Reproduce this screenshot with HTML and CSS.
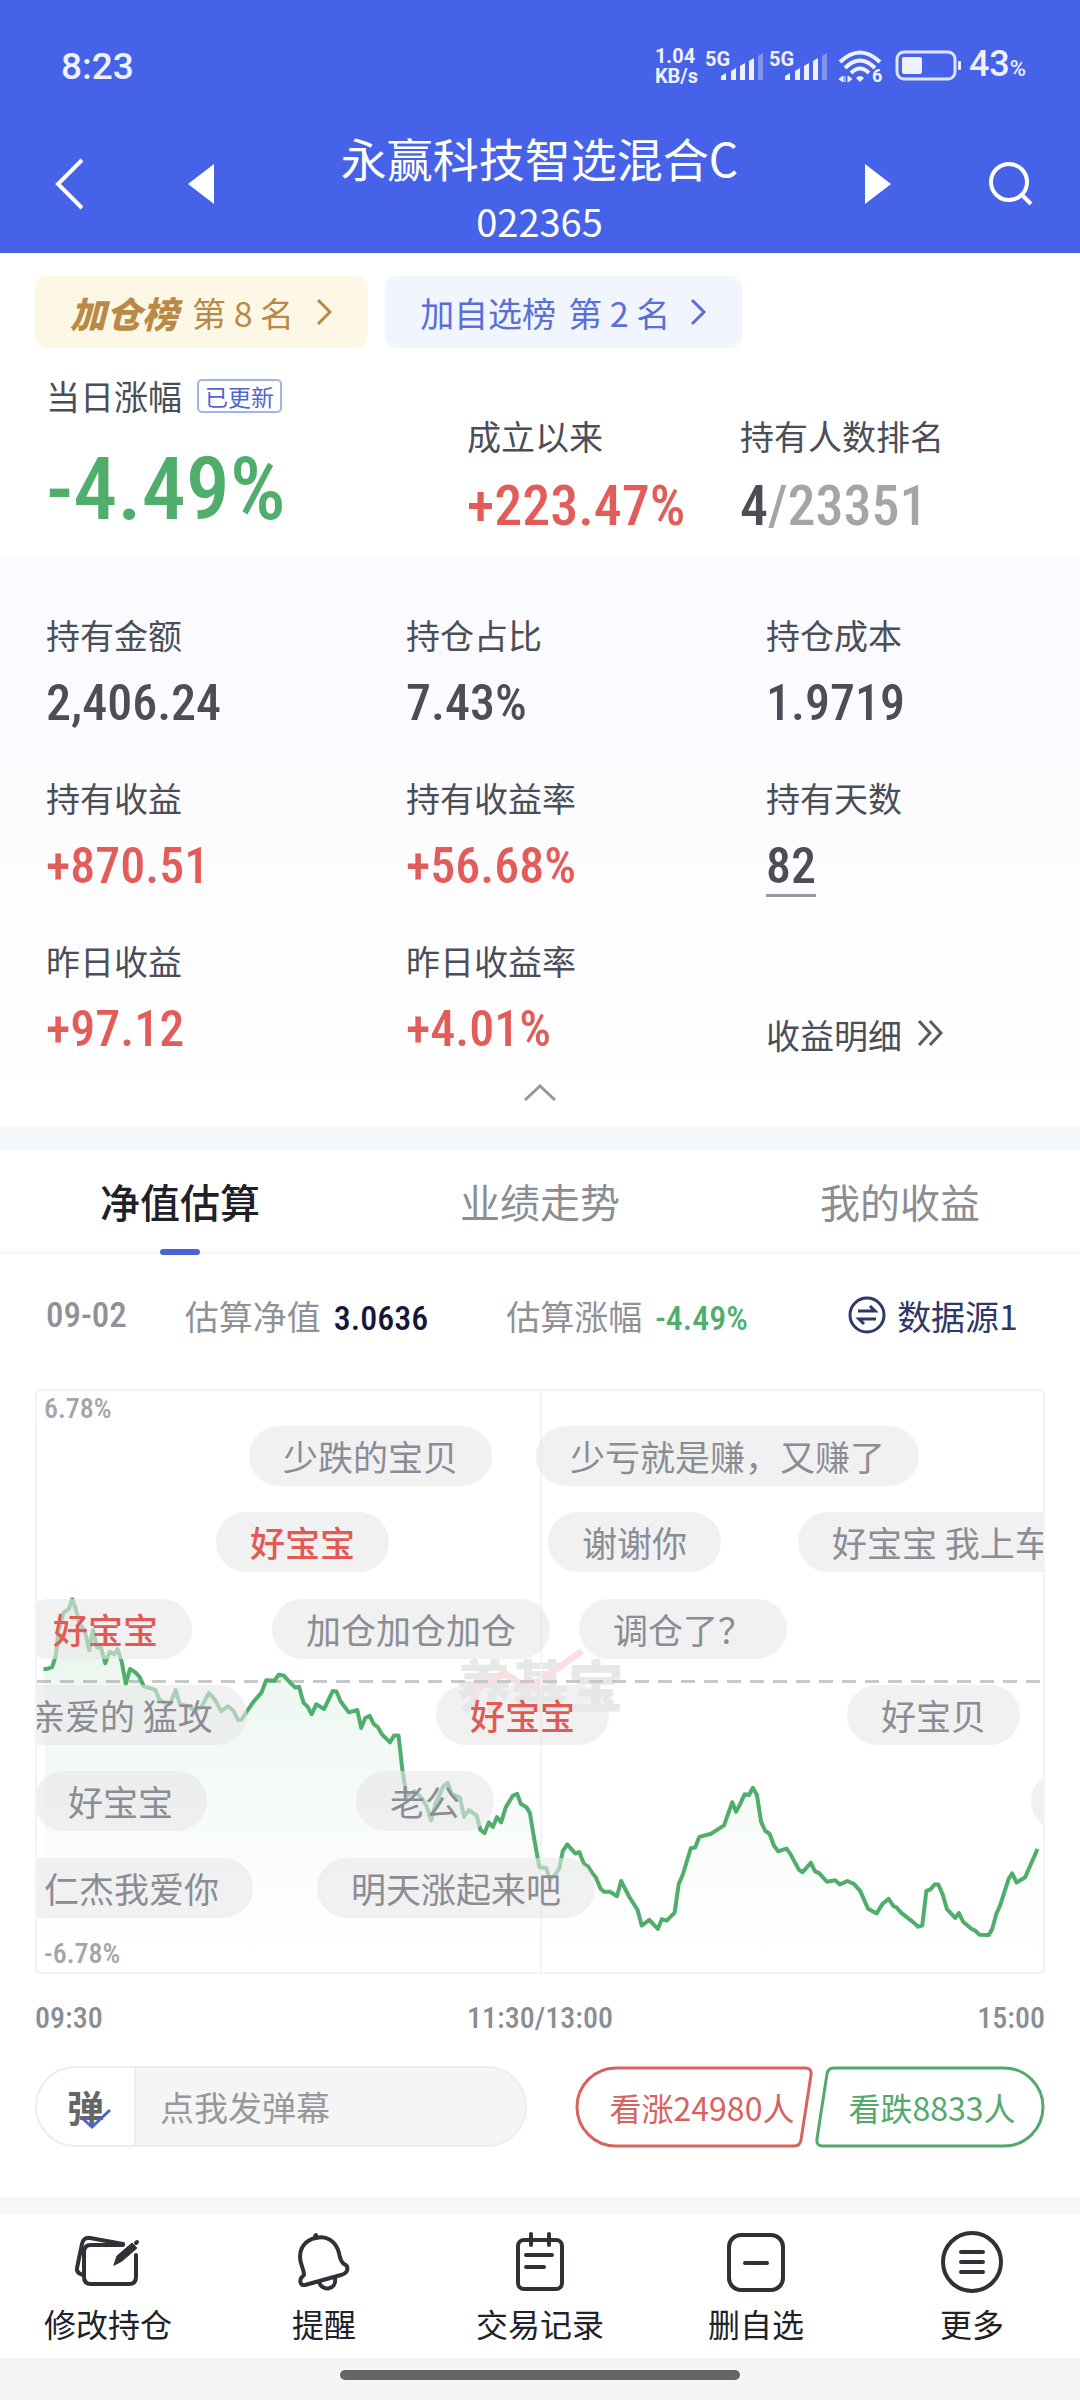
FILE: index.html
```html
<!DOCTYPE html>
<html lang="zh-CN">
<head>
<meta charset="utf-8">
<meta name="viewport" content="width=device-width, initial-scale=1">
<title>永赢科技智选混合C</title>
<link rel="stylesheet" href="styles.css">
</head>
<body>
<header class="top">
  <div class="status">
    <span class="status-time">8:23</span>
    <div class="status-icons">
      <span class="net-speed">1.04<br>KB/s</span>
      <svg class="signal" width="60" height="36" viewBox="0 0 60 36">
        <text x="0" y="18" class="signal-text">5G</text>
        <path d="M16 32v-4l5-3v7zM26 32v-9l5-3v12zM35 32v-14l5-3v17zM44 32v-19l5-3v22z"/>
        <path class="dim" d="M53 32v-24l5-3v27z"/>
      </svg>
      <svg class="signal" width="60" height="36" viewBox="0 0 60 36">
        <text x="0" y="18" class="signal-text">5G</text>
        <path d="M16 32v-4l5-3v7zM26 32v-9l5-3v12zM35 32v-14l5-3v17zM44 32v-19l5-3v22z"/>
        <path class="dim" d="M53 32v-24l5-3v27z"/>
      </svg>
      <svg class="wifi" width="46" height="36" viewBox="0 0 46 36">
        <g fill="none" stroke="#eef1ff" stroke-width="4">
          <path d="M3 14Q23-5 43 14"/>
          <path d="M8 20Q23 5 38 20"/>
          <path d="M14 25Q23 16 32 25"/>
        </g>
        <path d="M19 30q4-4 8 0l-4 4z"/>
        <path d="M6 34v-6l-4 3zM8 28v6M11 34v-6l4 3z" stroke="#eef1ff" stroke-width="1"/>
        <text x="35" y="34" class="wifi-text">6</text>
      </svg>
      <svg class="battery" width="68" height="32" viewBox="0 0 68 32">
        <rect x="2" y="2" width="58" height="27" rx="7" fill="none" stroke="#dfe5ff" stroke-width="3"/>
        <rect x="7" y="7" width="20" height="17" rx="2"/>
        <rect x="63" y="11" width="3" height="9" rx="1"/>
      </svg>
      <span class="percent">43<small>%</small></span>
    </div>
  </div>
  <div class="nav">
    <button class="icon-btn back" aria-label="返回"><svg width="32" height="56" viewBox="0 0 32 56"><path d="M29 4 5 28l24 24" fill="none" stroke="#fff" stroke-width="4"/></svg></button>
    <button class="icon-btn" aria-label="上一只"><svg width="28" height="42" viewBox="0 0 28 42"><path d="M27 1v40L1 21z" fill="#fff"/></svg></button>
    <div class="nav-title">
      <h1>永赢科技智选混合C</h1>
      <p>022365</p>
    </div>
    <button class="icon-btn" aria-label="下一只"><svg width="28" height="42" viewBox="0 0 28 42"><path d="M1 1v40l26-20z" fill="#fff"/></svg></button>
    <button class="icon-btn search" aria-label="搜索"><svg width="46" height="46" viewBox="0 0 46 46" fill="none" stroke="#fff" stroke-width="4"><circle cx="21" cy="21" r="18"/><path d="m34 34 9 9"/></svg></button>
  </div>
</header>

<main>
  <section class="summary">
    <div class="ranks">
      <a class="rank gold" href="#"><strong>加仓榜</strong><span>第 8 名</span><svg width="18" height="28" viewBox="0 0 18 28"><path d="m3 2 12 12L3 26"/></svg></a>
      <a class="rank blue" href="#"><span>加自选榜</span><span>第 2 名</span><svg width="18" height="28" viewBox="0 0 18 28"><path d="m3 2 12 12L3 26"/></svg></a>
    </div>
    <div class="headline">
      <div>
        <div class="label today">当日涨幅<span class="tag">已更新</span></div>
        <div class="huge down">-4.49%</div>
      </div>
      <div class="lower">
        <div class="label">成立以来</div>
        <div class="big up">+223.47%</div>
      </div>
      <div class="lower">
        <div class="label">持有人数排名</div>
        <div class="big">4<span class="muted">/23351</span></div>
      </div>
    </div>
  </section>

  <section class="holding">
    <div class="stats">
      <div><div class="label">持有金额</div><div class="num">2,406.24</div></div>
      <div><div class="label">持仓占比</div><div class="num">7.43%</div></div>
      <div><div class="label">持仓成本</div><div class="num">1.9719</div></div>
      <div><div class="label">持有收益</div><div class="num up">+870.51</div></div>
      <div><div class="label">持有收益率</div><div class="num up">+56.68%</div></div>
      <div><div class="label">持有天数</div><div class="num"><span class="underlined">82</span></div></div>
      <div><div class="label">昨日收益</div><div class="num up">+97.12</div></div>
      <div><div class="label">昨日收益率</div><div class="num up">+4.01%</div></div>
      <a class="detail" href="#">收益明细<svg width="26" height="28" viewBox="0 0 26 28"><path d="m2 2 11 12L2 26M13 2l11 12-11 12"/></svg></a>
    </div>
    <button class="collapse" aria-label="收起"><svg width="36" height="20" viewBox="0 0 36 20"><path d="M3 17 18 3l15 14"/></svg></button>
  </section>

  <section class="trend">
    <nav class="tabs">
      <button class="tab active">净值估算</button>
      <button class="tab">业绩走势</button>
      <button class="tab">我的收益</button>
    </nav>
    <div class="estimate">
      <span class="date">09-02</span>
      <span class="pair">估算净值<b>3.0636</b></span>
      <span class="pair">估算涨幅<b class="down">-4.49%</b></span>
      <button class="source"><svg width="38" height="38" viewBox="0 0 38 38"><circle cx="19" cy="19" r="17"/><path d="M10 15h17l-5-5M28 23H11l5 5"/></svg>数据源1</button>
    </div>

    <div class="chart">
      <span class="watermark">养基宝</span>
      <svg class="watermark-arrow" width="140" height="52" viewBox="0 0 140 52"><path d="m2 48 34-20 24 16 54-38" fill="none" stroke="#f9dfe2" stroke-width="7"/></svg>
      <svg class="plot" viewBox="103 27 2933 1526" preserveAspectRatio="none">
        <defs><linearGradient id="area" x1="0" y1="0" x2="0" y2="1"><stop offset="0" stop-color="#4fae6c" stop-opacity=".13"/><stop offset=".75" stop-color="#4fae6c" stop-opacity=".02"/><stop offset="1" stop-color="#4fae6c" stop-opacity="0"/></linearGradient></defs>
        <path class="grid-line" d="M1573 27V1553"/>
        <path class="zero-line" d="M103 790H3036"/>
        <path fill="url(#area)" d="M125 1553V757L147 752 158 722 165 660 180 610 206 574 228 640 255 708 266 655 302 742 338 705 362 796 374 757 402 778 414 802 448 812 475 845 507 812 520 850 582 858 604 820 640 868 660 855 690 892 735 842 771 787 808 772 867 804 904 876 917 850 940 862 965 815 988 842 1012 871 1037 865 1048 912 1073 880 1132 950 1157 932 1168 1020 1180 1090 1228 1100 1252 1155 1288 1065 1312 1085 1348 1145 1385 1142 1408 1188 1456 1160 1503 1085 1540 1135 1562 1250 1598 1310 1626 1280 1649 1218 1684 1238 1746 1334 1794 1354 1806 1314 1854 1390 1866 1431 1913 1440 1962 1397 1974 1322 2009 1228 2034 1198 2106 1168 2130 1107 2190 1069 2214 1158 2264 1236 2335 1291 2359 1266 2406 1316 2485 1322 2551 1399 2586 1361 2672 1434 2696 1340 2731 1323 2756 1388 2851 1455 2878 1456 2946 1294 3020 1230V1553Z"/>
        <polyline class="line" points="122,757 132,757 147,752 158,722 165,660 180,610 195,600 206,574 216,600 228,640 242,655 255,708 266,655 278,700 290,702 302,742 315,712 328,718 338,705 350,738 362,796 374,757 390,766 402,778 414,802 448,812 460,838 475,845 492,848 507,812 520,850 545,855 560,865 582,858 604,820 622,838 640,868 660,855 675,866 690,892 700,890 715,868 735,842 757,820 771,787 795,788 808,772 822,774 843,795 856,806 867,804 880,846 892,856 904,876 917,850 940,862 965,815 976,816 988,842 1012,871 1037,865 1048,912 1060,886 1073,880 1085,902 1096,909 1108,928 1132,950 1144,932 1157,932 1168,1020 1180,1090 1204,1078 1228,1100 1240,1120 1252,1155 1265,1110 1288,1065 1300,1056 1312,1085 1336,1095 1348,1145 1362,1128 1385,1142 1396,1180 1408,1188 1420,1160 1432,1172 1444,1146 1456,1160 1470,1120 1490,1090 1503,1085 1514,1112 1530,1120 1540,1135 1551,1195 1562,1250 1568,1278 1588,1280 1598,1310 1613,1298 1626,1280 1636,1235 1649,1218 1673,1242 1684,1238 1698,1270 1710,1276 1722,1294 1732,1304 1746,1334 1756,1342 1773,1342 1794,1354 1806,1314 1830,1356 1854,1390 1866,1431 1888,1416 1913,1440 1925,1414 1939,1418 1962,1397 1974,1322 1986,1297 2009,1228 2022,1226 2034,1198 2068,1190 2106,1168 2130,1107 2141,1132 2153,1112 2166,1086 2179,1088 2190,1069 2202,1088 2214,1158 2226,1182 2239,1190 2251,1220 2264,1236 2288,1229 2299,1242 2324,1284 2335,1291 2359,1266 2371,1288 2384,1294 2406,1316 2430,1312 2444,1323 2466,1314 2485,1322 2503,1340 2526,1387 2551,1399 2568,1374 2586,1361 2600,1380 2610,1384 2622,1397 2660,1424 2672,1434 2684,1431 2696,1340 2708,1336 2720,1323 2731,1323 2743,1348 2756,1388 2780,1411 2791,1398 2803,1421 2828,1440 2838,1444 2851,1455 2878,1456 2888,1440 2900,1400 2911,1378 2936,1308 2946,1294 2959,1318 2984,1304 3020,1230"/>
      </svg>
      <span class="axis-y">6.78%</span>
      <span class="axis-y">-6.78%</span>
      <div class="danmaku">
        <span class="pill lane1" style="left:212px">少跌的宝贝</span>
        <span class="pill lane1" style="left:499px">少亏就是赚，又赚了</span>
        <span class="pill lane2 mine" style="left:179px">好宝宝</span>
        <span class="pill lane2" style="left:511px">谢谢你</span>
        <span class="pill lane2" style="left:761px">好宝宝 我上车了</span>
        <span class="pill lane3 mine" style="left:-18px">好宝宝</span>
        <span class="pill lane3" style="left:235px">加仓加仓加仓</span>
        <span class="pill lane3" style="left:542px">调仓了？</span>
        <span class="pill lane4" style="left:-41px">亲爱的 猛攻</span>
        <span class="pill lane4 mine" style="left:399px">好宝宝</span>
        <span class="pill lane4" style="left:810px">好宝贝</span>
        <span class="pill lane5" style="left:-3px">好宝宝</span>
        <span class="pill lane5" style="left:319px">老公</span>
        <span class="pill lane5" style="left:994px">好</span>
        <span class="pill lane6" style="left:-27px">仁杰我爱你</span>
        <span class="pill lane6" style="left:280px">明天涨起来吧</span>
      </div>
    </div>
    <div class="axis-x"><span>09:30</span><span>11:30/13:00</span><span>15:00</span></div>

    <div class="actions">
      <div class="composer">
        <button class="toggle" aria-label="弹幕开关">弹<svg width="32" height="22" viewBox="0 0 32 22"><path d="m2 10 10 9L30 2"/></svg></button>
        <input type="text" placeholder="点我发弹幕" aria-label="点我发弹幕">
      </div>
      <div class="votes">
        <button class="vote rise"><svg viewBox="0 0 238 82" preserveAspectRatio="none"><path d="M41 2H230Q237 2 236 9L226 74Q225 80 219 80H41A39 39 0 0 1 41 2Z"/></svg><span>看涨24980人</span></button>
        <button class="vote fall"><svg viewBox="0 0 230 82" preserveAspectRatio="none"><path d="M189 2H19Q13 2 12 8L2 73Q1 80 8 80H189A39 39 0 0 0 189 2Z"/></svg><span>看跌8833人</span></button>
      </div>
    </div>
  </section>
</main>

<nav class="toolbar">
  <a href="#"><svg width="66" height="62" viewBox="3 0 66 62">
    <path d="M51 14H19q-7 0-7 7v25q0 7 7 7h38q7 0 7-7V24"/>
    <path d="M51 13 18 7q-7-1-8 6L5 37q-1 5 6 7"/>
    <path class="solid" d="m42 34 3-9 15-13 5 5-15 13z"/><path d="m64 12 1-1"/>
  </svg>修改持仓</a>
  <a href="#"><svg width="62" height="62" viewBox="0 0 62 62">
    <path d="M12 54 48 44c8-2 8-9 3-11-3-2-4-5-5-11C43 10 33 4 23 7 12 9 7 17 7 26c0 8 4 11 4 18-6 5-4 11 1 10ZM22 5l1-1"/>
    <path d="M26 51c3 10 18 8 16-4"/>
  </svg>提醒</a>
  <a href="#"><svg width="62" height="62" viewBox="0 0 62 62">
    <rect x="9" y="9" width="44" height="49" rx="6"/><path d="M22 3v11M40 3v11M17 24h26M17 36h18"/>
  </svg>交易记录</a>
  <a href="#"><svg width="62" height="62" viewBox="0 0 62 62">
    <rect x="4" y="4" width="54" height="55" rx="12"/><path d="M20 32h22"/>
  </svg>删自选</a>
  <a href="#"><svg width="62" height="62" viewBox="0 0 62 62">
    <circle cx="31" cy="31" r="29"/><path d="M20 21h22M20 31h22M20 41h22"/>
  </svg>更多</a>
</nav>
<div class="home-bar"><span></span></div>
</body>
</html>
```
FILE: styles.css
```css
* { box-sizing: border-box; }
body {
  margin: 0;
  background: #fff;
  color: #4c4e57;
  font-family: "Noto Sans CJK SC", sans-serif;
}
h1, p { margin: 0; font-weight: 400; }
a { color: inherit; text-decoration: none; }
button { border: 0; padding: 0; background: none; font: inherit; color: inherit; cursor: pointer; }
svg { display: block; flex: none; }

/* header */
.top { background: #4662e8; color: #fff; padding-top: 42px; padding-bottom: 5px; }
.status {
  display: flex; justify-content: space-between; align-items: center;
  height: 48px; padding: 0 54px 0 61px;
  font-family: Roboto, sans-serif; color: #eef1ff;
}
.status-time { font-size: 37px; font-weight: 500; }
.status-icons { display: flex; align-items: center; }
.status-icons svg { fill: #eef1ff; overflow: visible; }
.net-speed { width: 50px; font-size: 20px; line-height: 20px; font-weight: 700; }
.signal { margin-right: 4px; }
.signal-text { font-size: 20px; font-weight: 700; }
.wifi-text { font-size: 18px; font-weight: 700; }
.status-icons .dim { opacity: .35; }
.wifi { margin: 0 12px 0 4px; }
.percent { margin-left: 6px; font-size: 36px; line-height: 48px; font-weight: 500; }
.percent small { font-size: 22px; }
.nav { display: flex; align-items: center; margin-top: 30px; padding: 0 46px 0 53px; }
.icon-btn.back { margin-right: 102px; }
.icon-btn.search { margin-left: 96px; }
.nav-title { flex: 1; text-align: center; }
.nav-title h1 { font-size: 46px; line-height: 74px; }
.nav-title p { font-size: 38px; line-height: 54px; }

/* summary */
.summary { padding: 23px 35px 0; }
.ranks { display: flex; gap: 17px; }
.rank {
  display: flex; align-items: center; gap: 14px;
  height: 72px; padding: 0 35px; border-radius: 12px; font-size: 34px;
}
.rank strong { font-weight: 900; font-style: italic; font-size: 36px; }
.rank svg { margin-left: 7px; fill: none; stroke: currentColor; stroke-width: 3; }
.gold { background: #fdf8e6; color: #b98a47; }
.blue { gap: 12px; background: #f0f5fe; color: #5a70d6; }
.label { font-size: 34px; line-height: 44px; }
.headline { display: grid; grid-template-columns: 421fr 273fr 305fr; padding: 26px 0 10px 11px; }
.today { display: flex; align-items: center; gap: 15px; }
.tag {
  border: 2px solid #a3b2ea; border-radius: 5px; color: #4f66d0;
  font-size: 23px; line-height: 30px; padding: 0 6px;
}
.lower { padding-top: 40px; }
.huge, .big, .num, .pair b, .date, .axis-y, .axis-x {
  font-family: "Roboto Condensed", Roboto, sans-serif; font-weight: 500;
}
.huge { padding-top: 20px; font-size: 88px; line-height: 102px; }
.big { padding-top: 6px; font-size: 56px; line-height: 84px; }
.muted { color: #a4a5a9; }
.down { color: #4fae6c; }
.up { color: #e25d59; }

/* holding */
.holding { background: linear-gradient(#fafaff, #fff); padding-top: 55px; border-bottom: 23px solid #f5f8fb; }
.stats { display: grid; grid-template-columns: repeat(3, 1fr); row-gap: 37px; }
.stats > * { padding-left: 46px; }
.num { padding-top: 10px; font-size: 50px; line-height: 72px; }
.underlined { display: inline-block; line-height: 56px; border-bottom: 3px solid #9a9ba0; }
.detail { display: flex; align-items: flex-end; gap: 15px; padding-bottom: 8px; font-size: 34px; line-height: 44px; }
.detail svg { margin-bottom: 10px; fill: none; stroke: #5a5c64; stroke-width: 3; }
.collapse { display: block; margin: 18px auto 0; padding-bottom: 24px; }
.collapse svg { fill: none; stroke: #97989c; stroke-width: 3; }

/* trend */
.tabs { display: grid; grid-template-columns: repeat(3, 1fr); height: 104px; border-bottom: 3px solid #f7f7f9; }
.tab { position: relative; font-size: 40px; color: #8b8d95; }
.tab.active { color: #1f2128; font-weight: 500; }
.tab.active::after {
  content: ""; position: absolute; left: 50%; bottom: -4px;
  width: 40px; height: 6px; margin-left: -20px; border-radius: 3px; background: #4a63d8;
}
.estimate {
  display: flex; align-items: center;
  padding: 0 62px 0 46px; margin-top: 37px; height: 48px; font-size: 34px; color: #8f9197;
}
.date { margin-right: 58px; font-size: 35px; }
.pair { margin-right: 78px; }
.pair b { margin-left: 13px; font-size: 34px; color: #14163a; }
.pair b.down { color: #4fae6c; }
.source { display: flex; align-items: center; gap: 11px; margin-left: auto; color: #2f3866; }
.source svg { fill: none; stroke: currentColor; stroke-width: 3; }

.chart {
  position: relative; display: flex; flex-direction: column; justify-content: space-between;
  height: 585px; margin: 50px 35px 0; padding: 1px 7px; overflow: hidden;
  border: 2px solid #f3f3f4; border-radius: 4px;
}
.plot { position: absolute; inset: 0; width: 100%; height: 100%; }
.plot path, .plot polyline { vector-effect: non-scaling-stroke; }
.grid-line { stroke: #f3f3f4; stroke-width: 2; }
.zero-line { stroke: #c8c8ca; stroke-width: 3; stroke-dasharray: 14 9; }
.line { fill: none; stroke: #4fae6c; stroke-width: 4; stroke-linejoin: round; }
.axis-y { position: relative; font-size: 28px; line-height: 34px; color: #a4a5a9; }
.watermark {
  position: absolute; left: 50%; top: 252px; width: 180px; margin-left: -84px;
  font-size: 56px; line-height: 80px; font-weight: 900; color: #e7e7e8;
}
.watermark-arrow { position: absolute; left: 50%; top: 254px; margin-left: -72px; }
.danmaku { position: absolute; inset: 0; }
.pill {
  position: absolute; height: 60px; padding: 0 34px; border-radius: 30px;
  background: rgba(231, 231, 232, .6); color: #8b8c94;
  font-size: 35px; line-height: 60px; white-space: nowrap;
}
.mine { color: #e05a56; font-weight: 500; }
.lane1 { top: 35px; }
.lane2 { top: 121px; }
.lane3 { top: 208px; }
.lane4 { top: 294px; }
.lane5 { top: 380px; }
.lane6 { top: 467px; }
.axis-x { display: flex; justify-content: space-between; margin: 24px 35px 0; font-size: 30px; line-height: 40px; color: #8b8d95; }

.actions { display: flex; justify-content: space-between; margin: 28px 35px 0; padding-bottom: 49px; }
.composer {
  display: flex; flex: 0 1 492px; height: 81px; overflow: hidden;
  border: 2px solid #ededee; border-radius: 41px; background: #f5f5f5;
}
.toggle {
  position: relative; flex: none; width: 99px; background: #fff; border-right: 2px solid #ededee;
  color: #666; font-size: 37px; font-weight: 700;
}
.toggle svg { position: absolute; left: 43px; top: 40px; fill: none; stroke: #4a63d8; stroke-width: 3; }
.composer input {
  flex: 1; min-width: 0; border: 0; padding: 0 24px; background: none; outline: 0;
  font: 34px "Noto Sans CJK SC", sans-serif; color: #4c4e57;
}
.composer input::placeholder { color: #999; }
.votes { display: flex; gap: 2px; }
.vote { position: relative; width: 238px; height: 82px; font-size: 32px; padding-left: 16px; }
.vote svg { position: absolute; inset: 0; width: 100%; height: 100%; fill: none; stroke: currentColor; stroke-width: 3; }
.rise { color: #d9625f; }
.fall { width: 230px; padding-left: 4px; color: #53a96b; }

/* toolbar */
.toolbar {
  display: grid; grid-template-columns: repeat(5, 1fr);
  height: 161px; border-top: 17px solid #f5f7fa; color: #202228; font-size: 32px; line-height: 44px;
}
.toolbar a { display: flex; flex-direction: column; align-items: center; gap: 8px; padding-top: 17px; }
.toolbar svg { fill: none; stroke: #303138; stroke-width: 4; stroke-linecap: round; stroke-linejoin: round; }
.toolbar .solid { fill: #303138; stroke-width: 1; }
.home-bar { padding: 12px 0 20px; background: #f5f5f5; }
.home-bar span { display: block; width: 37%; height: 10px; margin: 0 auto; border-radius: 5px; background: #666; }
```
